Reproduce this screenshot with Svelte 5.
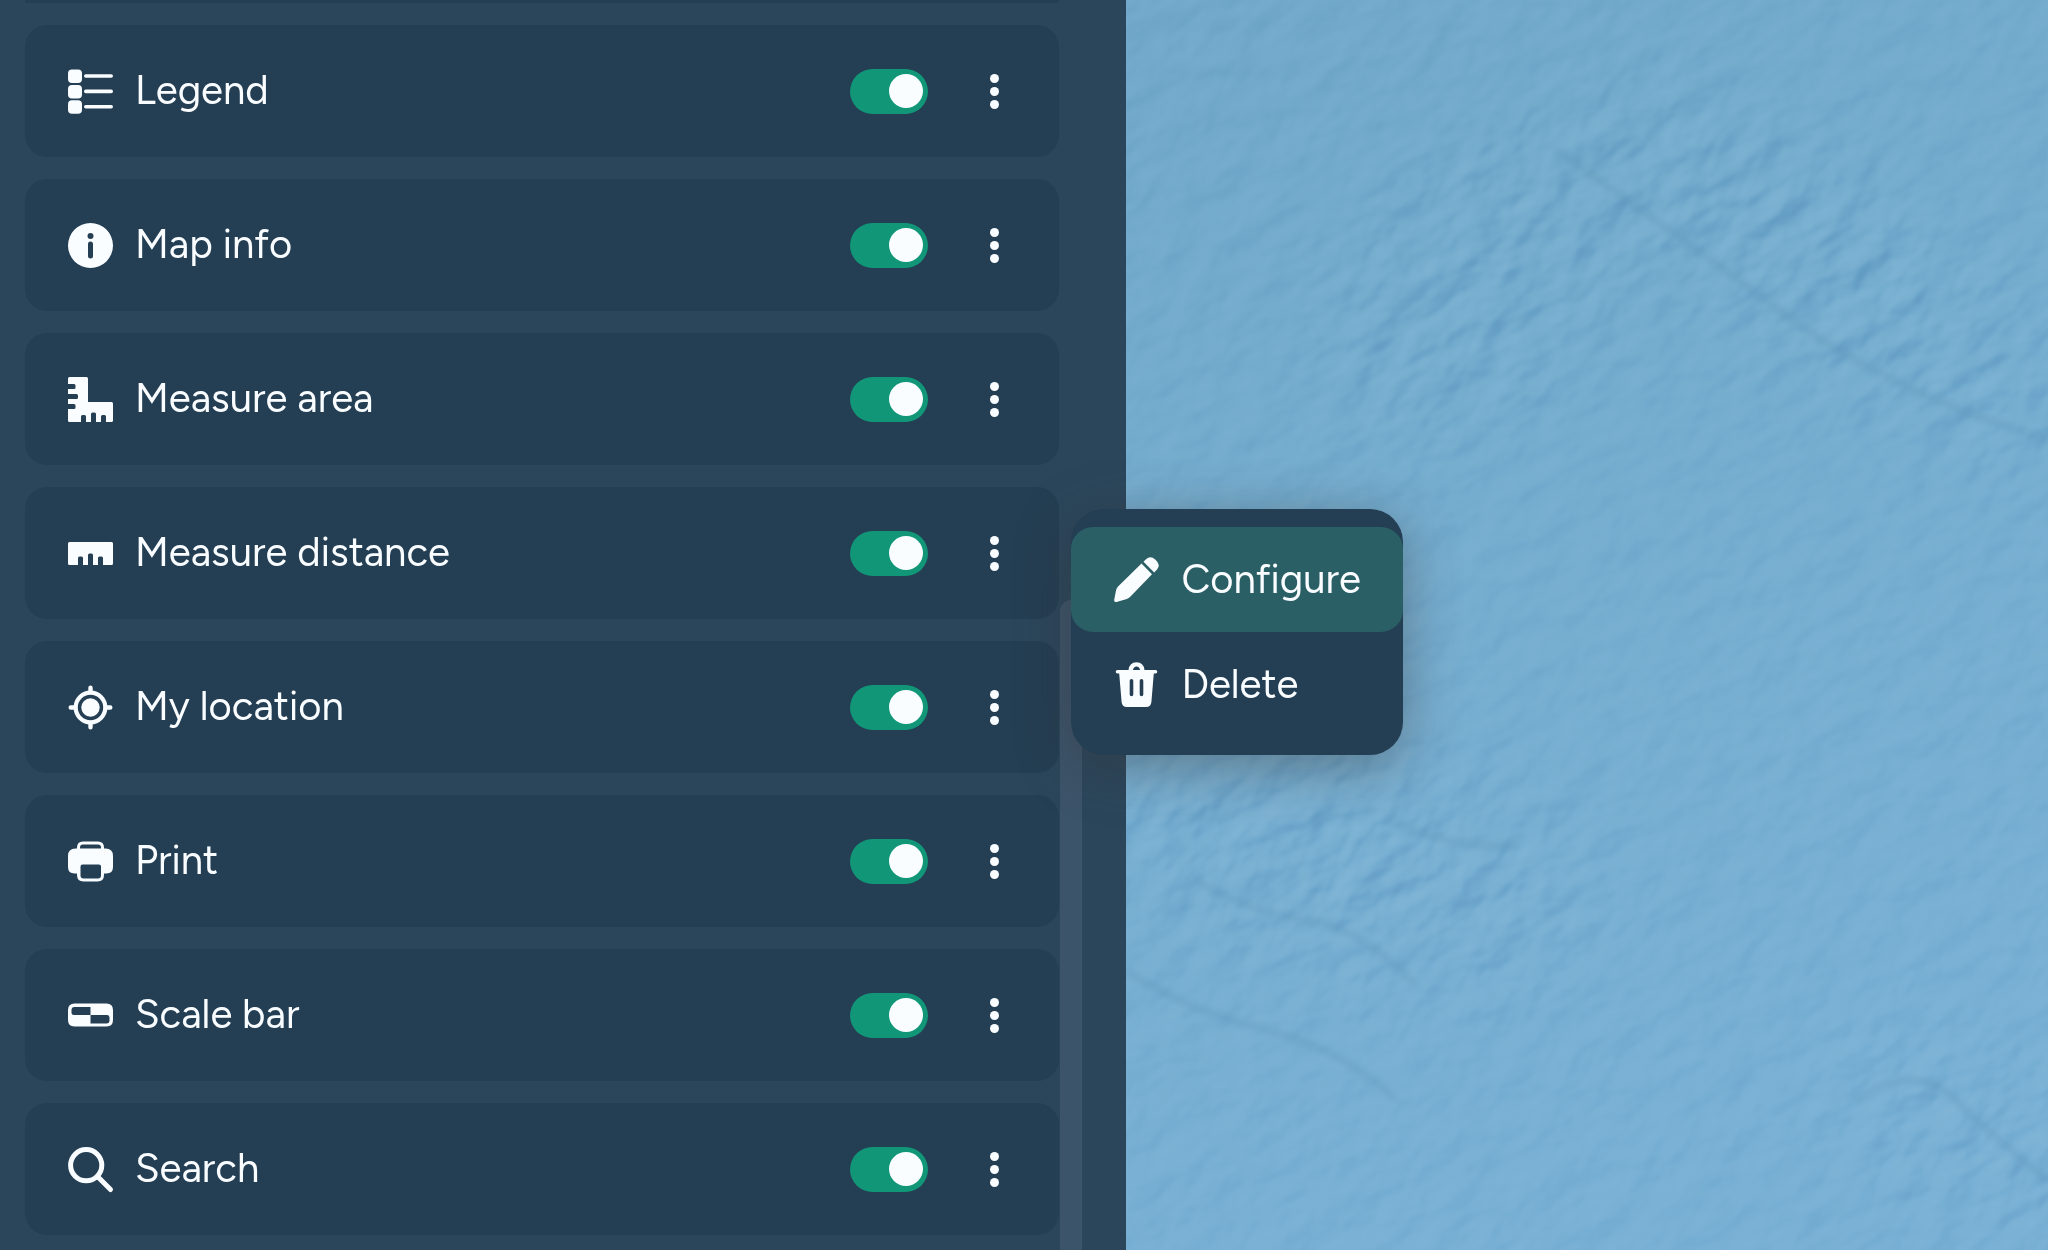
<script>
  let tools = $state([
    { id: 'legend', label: 'Legend', on: true },
    { id: 'info', label: 'Map info', on: true },
    { id: 'area', label: 'Measure area', on: true },
    { id: 'distance', label: 'Measure distance', on: true },
    { id: 'location', label: 'My location', on: true },
    { id: 'print', label: 'Print', on: true },
    { id: 'scale', label: 'Scale bar', on: true },
    { id: 'search', label: 'Search', on: true }
  ]);
  let openMenu = $state('distance');

  const actions = [
    { id: 'configure', label: 'Configure' },
    { id: 'delete', label: 'Delete' }
  ];

  function toggleMenu(id) {
    openMenu = openMenu === id ? '' : id;
  }
</script>

{#snippet icon(id)}
  <svg class="icon" viewBox="0 0 45 45" aria-hidden="true">
    {#if id === 'legend'}
      <rect x="0" y="0.5" width="14" height="13.5" rx="4" />
      <rect x="0" y="16" width="14" height="13.5" rx="4" />
      <rect x="0" y="31.3" width="14" height="13.5" rx="4" />
      <path class="line" stroke-width="3.6" d="M17.8 7H43.2M17.8 22.4H43.2M17.8 37.8H43.2" />
    {:else if id === 'info'}
      <path fill-rule="evenodd" d="M22.5 0a22.5 22.5 0 1 1 0 45a22.5 22.5 0 1 1 0-45zM22.5 10a3 3 0 1 0 0 6a3 3 0 1 0 0-6zM22.5 18.5a2.5 2.5 0 0 0-2.5 2.5v12a2.5 2.5 0 0 0 5 0v-12a2.5 2.5 0 0 0-2.500-2.500z" />
    {:else if id === 'area'}
      <path d="M1.500 0H18.500Q20 0 20 1.500V25H43.500Q45 25 45 26.500V43.500Q45 45 43.500 45H38V39.500Q38 38 36.500 38H34.500Q33 38 33 39.500V45H28V37Q28 35.500 26.500 35.500H24.500Q23 35.500 23 37V45H18V39.500Q18 38 16.500 38H14.500Q13 38 13 39.500V45H1.500Q0 45 0 43.500V32H6Q7.500 32 7.500 30.500V28.500Q7.500 27 6 27H0V22H8.500Q10 22 10 20.500V18.500Q10 17 8.500 17H0V12H6Q7.500 12 7.500 10.500V8.500Q7.500 7 6 7H0V1.500Q0 0 1.500 0z" />
    {:else if id === 'distance'}
      <path d="M1.500 11H43.500Q45 11 45 12.500V32.500Q45 34 43.500 34H35V27Q35 25.500 33.500 25.500H31.500Q30 25.500 30 27V34H25V24Q25 22.500 23.500 22.500H21.500Q20 22.500 20 24V34H15V27Q15 25.500 13.500 25.500H11.500Q10 25.500 10 27V34H1.500Q0 34 0 32.500V12.500Q0 11 1.500 11z" />
    {:else if id === 'location'}
      <circle cx="22.5" cy="22.5" r="9.2" />
      <circle class="line" cx="22.5" cy="22.5" r="14.8" stroke-width="4.2" />
      <path class="line" stroke-width="4.4" d="M22.5 2.700V7M22.5 38V42.300M2.700 22.5H7M38 22.5H42.300" />
    {:else if id === 'print'}
      <path class="line" stroke-width="3" d="M10.500 11V8.500Q10.500 4 15 4H30Q34.500 4 34.500 8.500V11" />
      <path fill-rule="evenodd" d="M7.500 9.500H37.500Q45 9.500 45 17V28Q45 34.500 38.500 34.500H36V36Q36 42.500 29.500 42.500H15.500Q9 42.500 9 36V34.500H6.500Q0 34.500 0 28V17Q0 9.500 7.500 9.500zM14.500 25.500Q12.500 25.500 12.500 27.500V36.500Q12.500 39.500 15.500 39.500H30Q33 39.500 33 36.500V27.500Q33 25.500 31 25.500z" />
    {:else if id === 'scale'}
      <path fill-rule="evenodd" d="M6.500 10.500H38.500Q45 10.500 45 17V27Q45 33.500 38.500 33.500H6.500Q0 33.500 0 27V17Q0 10.500 6.500 10.500zM6.500 14Q3.500 14 3.500 17V19.500Q3.500 22 6 22H22.500V14zM22.500 22V30.500H38.500Q41.500 30.500 41.500 27.500V25Q41.500 22 39 22z" />
    {:else if id === 'search'}
      <circle class="line" cx="18.2" cy="18.2" r="15.6" stroke-width="5" />
      <path class="line" stroke-width="5" d="M29.500 29.500L42.500 42.500" />
    {:else if id === 'configure'}
      <path d="M27.500 6.500L38 17.200L16.500 39.500Q14.500 41.700 12 42.300L2.500 44.900Q-0.400 45.400 0.300 42.300L2 33.500Q2.500 31 4.300 29.300z" />
      <path d="M29.500 4.700L32.300 1.900Q36.500-1.600 41.500 2.700Q46.800 7.500 43.200 12.200L40.200 15.500z" />
    {:else if id === 'delete'}
      <path fill-rule="evenodd" d="M3.500 8H14.500Q15.500 0.300 22.500 0.300Q29.500 0.300 30.500 8H41.500Q43.300 8 43.300 9.800Q43.300 11.600 41.500 11.600H39.800L37.400 40Q37 45 32 45H13Q8 45 7.600 40L5.200 11.600H3.500Q1.700 11.600 1.700 9.800Q1.700 8 3.500 8zM19 8H26Q25.500 4.500 22.500 4.500Q19.500 4.500 19 8zM17.500 17Q15.700 17 15.700 18.800V32.500Q15.700 34.300 17.500 34.300Q19.300 34.300 19.300 32.500V18.800Q19.300 17 17.500 17zM27.500 17Q25.700 17 25.700 18.800V32.500Q25.700 34.300 27.500 34.300Q29.300 34.300 29.300 32.500V18.800Q29.300 17 27.500 17z" />
    {/if}
  </svg>
{/snippet}

<main class="app">
  <section class="panel" aria-label="Map tools">
    <ul class="list">
      <li class="peek" aria-hidden="true"></li>
      {#each tools as tool (tool.id)}
        <li class="card">
          {@render icon(tool.id)}
          <label class="name" for={'tool-' + tool.id}>{tool.label}</label>
          <input class="switch" type="checkbox" role="switch" id={'tool-' + tool.id} bind:checked={tool.on} />
          <button
            class="more"
            type="button"
            aria-label={'Options for ' + tool.label}
            aria-expanded={openMenu === tool.id}
            onclick={() => toggleMenu(tool.id)}
          >
            <span class="dot"></span><span class="dot"></span><span class="dot"></span>
          </button>
          {#if openMenu === tool.id}
            <div class="menu" role="menu">
              {#each actions as action, i (action.id)}
                <button class="action" class:active={i === 0} type="button" role="menuitem">
                  {@render icon(action.id)}
                  <span class="caption">{action.label}</span>
                </button>
              {/each}
            </div>
          {/if}
        </li>
      {/each}
    </ul>
    <div class="rail"><div class="thumb"></div></div>
  </section>

  <section class="map" aria-label="Map">
    <svg class="relief" viewBox="0 0 922 1250" preserveAspectRatio="xMidYMid slice" aria-hidden="true">
      <defs>
        <linearGradient id="sea" x1="0" y1="0" x2="0.3" y2="1">
          <stop offset="0" stop-color="#72a9ca" />
          <stop offset="0.45" stop-color="#75adcf" />
          <stop offset="1" stop-color="#79b0d4" />
        </linearGradient>
        <filter id="bumps" x="0" y="0" width="100%" height="100%" color-interpolation-filters="sRGB">
          <feTurbulence type="fractalNoise" baseFrequency="0.022 0.034" numOctaves="3" seed="11" />
          <feColorMatrix values="0 0 0 0 0  0 0 0 0 0  0 0 0 0 0  1 0 0 0 0" />
          <feGaussianBlur stdDeviation="2" />
          <feDiffuseLighting surfaceScale="7" diffuseConstant="0.71" lighting-color="#ffffff">
            <feDistantLight azimuth="250" elevation="45" />
          </feDiffuseLighting>
        </filter>
        <filter id="soft" x="-50%" y="-50%" width="200%" height="200%"><feGaussianBlur stdDeviation="50" /></filter>
        <filter id="ridge" x="-10%" y="-10%" width="120%" height="120%"><feGaussianBlur stdDeviation="3" /></filter>
        <mask id="rough">
          <rect width="922" height="1250" fill="#606060" />
          <g filter="url(#soft)" fill="#fff">
            <ellipse cx="350" cy="290" rx="110" ry="170" transform="rotate(35 350 290)" />
            <ellipse cx="700" cy="270" rx="300" ry="90" transform="rotate(32 700 270)" />
            <ellipse cx="220" cy="860" rx="260" ry="100" transform="rotate(12 220 860)" />
            <ellipse cx="850" cy="1130" rx="150" ry="60" transform="rotate(28 850 1130)" />
          </g>
        </mask>
      </defs>
      <rect width="922" height="1250" fill="url(#sea)" />
      <g class="grain" mask="url(#rough)">
        <g transform="rotate(-32 461 625)">
          <rect x="-400" y="-300" width="1722" height="1850" filter="url(#bumps)" />
        </g>
      </g>
      <g class="ridges" filter="url(#ridge)">
        <path d="M430 150Q560 240 660 315T922 440" />
        <path d="M70 880Q130 915 180 920T290 985" />
        <path d="M0 970Q60 1010 140 1030T270 1100" />
        <path d="M730 1100Q790 1060 830 1100T922 1180" />
        <path d="M260 820Q330 850 390 845" />
      </g>
    </svg>
  </section>
</main>

<style>
  :global(body) {
    margin: 0;
    background: #2b465b;
  }

  .app {
    --card: #243e53;
    --panel: #2b465b;
    --text: #f9fdff;
    display: grid;
    grid-template-columns: 55fr 45fr;
    height: 100vh;
    overflow: hidden;
    color: var(--text);
    font-family: Figtree, Inter, 'Liberation Sans', sans-serif;
    font-size: 40px;
    line-height: 48px;
  }

  .panel {
    position: relative;
    z-index: 1;
    display: flex;
    min-width: 0;
    height: 100vh;
    box-sizing: border-box;
    padding: 0 44px 0 25px;
    background: var(--panel);
  }

  .list {
    flex: 1;
    display: flex;
    flex-direction: column;
    gap: 22px;
    margin: 0;
    padding: 0;
    list-style: none;
  }

  .peek {
    flex: none;
    height: 3px;
    background: var(--card);
  }

  .card {
    position: relative;
    flex: none;
    display: flex;
    align-items: center;
    gap: 22px;
    box-sizing: border-box;
    height: 132px;
    padding: 0 42px 0 43px;
    border-radius: 22px;
    background: var(--card);
  }

  .icon {
    flex: none;
    width: 45px;
    height: 45px;
    fill: var(--text);
    overflow: visible;
  }

  .line {
    fill: none;
    stroke: var(--text);
    stroke-linecap: round;
  }

  .name {
    flex: 1;
  }

  .name,
  .caption {
    padding-bottom: 2px;
  }

  .switch {
    appearance: none;
    display: flex;
    align-items: center;
    box-sizing: border-box;
    width: 78px;
    height: 45px;
    margin: 0;
    padding: 0 5px;
    border-radius: 23px;
    background: #5b7185;
    cursor: pointer;
  }

  .switch::before {
    content: '';
    width: 34px;
    height: 34px;
    border-radius: 50%;
    background: var(--text);
  }

  .switch:checked {
    justify-content: flex-end;
    background: #119678;
  }

  button {
    border: 0;
    color: inherit;
    font: inherit;
    background: none;
    cursor: pointer;
  }

  .more {
    display: flex;
    flex-direction: column;
    align-items: center;
    justify-content: center;
    gap: 4px;
    width: 45px;
    height: 45px;
    margin-left: 22px;
    padding: 0;
  }

  .dot {
    width: 9px;
    height: 9px;
    border-radius: 50%;
    background: var(--text);
  }

  .menu {
    position: absolute;
    z-index: 2;
    top: 22px;
    left: calc(100% + 12px);
    width: 332px;
    box-sizing: border-box;
    padding: 18px 0;
    border-radius: 33px;
    background: var(--card);
    box-shadow: 0 11px 55px rgba(56, 56, 56, 0.45);
    overflow: hidden;
  }

  .action {
    display: flex;
    align-items: center;
    gap: 22px;
    width: 100%;
    height: 105px;
    padding: 0 43px;
    border-radius: 22px;
    text-align: left;
  }

  .action.active {
    background: #2a5f65;
  }

  .rail {
    display: flex;
    flex-direction: column;
    width: 22px;
    padding-top: 48vh;
    margin-left: 1px;
  }

  .thumb {
    flex: 1;
    border-radius: 11px 11px 0 0;
    background: #3c546a;
  }

  .map {
    min-width: 0;
    height: 100vh;
    overflow: hidden;
    background: #76aed1;
  }

  .relief {
    display: block;
    width: 100%;
    height: 100%;
  }

  .grain {
    mix-blend-mode: soft-light;
    opacity: 0.45;
  }

  .ridges {
    fill: none;
    stroke: #5c93b6;
    stroke-width: 6;
    opacity: 0.35;
  }
</style>
